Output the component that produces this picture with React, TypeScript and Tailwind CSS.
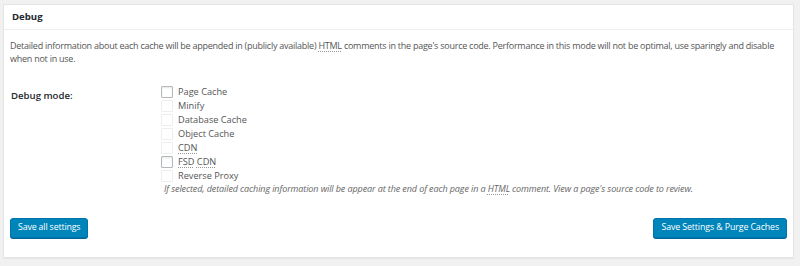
import React from "react";

const items = [
  { label: "Page Cache", on: true },
  { label: "Minify", on: false },
  { label: "Database Cache", on: false },
  { label: "Object Cache", on: false },
  { label: "CDN", on: false, abbr: true },
  { label: "FSD CDN", on: true, abbr: true },
  { label: "Reverse Proxy", on: false },
];

function Abbr({ children }: { children: React.ReactNode }) {
  return (
    <span className="underline decoration-dotted decoration-[#999] underline-offset-2">
      {children}
    </span>
  );
}

export default function App() {
  return (
    <div
      className="w-[800px] h-[266px] bg-[#f1f1f1] pt-[4px] pl-[3px] pr-[6px] text-[#444]"
      style={{ fontFamily: '"Open Sans", "Noto Sans", sans-serif' }}
    >
      <div className="bg-white h-[254px] border border-[#e5e5e5] shadow-[0_1px_1px_rgba(0,0,0,0.04)]">
        {/* header */}
        <div className="h-[25px] border-b border-[#eee] flex items-center pl-[8px]">
          <h3 className="text-[9.6px] font-bold text-[#23282d]">Debug</h3>
        </div>

        <div className="px-[6px] pt-[9px]">
          <p className="text-[9px] tracking-[-0.25px] leading-[13px] text-[#555] pr-[2px]">
            Detailed information about each cache will be appended in (publicly available){" "}
            <Abbr>HTML</Abbr> comments in the page's source code. Performance in this mode
            will not be optimal, use sparingly and disable when not in use.
          </p>

          <div className="flex mt-[20px]">
            <div className="w-[151px] pl-[1px] pt-[4px] text-[9.6px] font-semibold text-[#23282d]">
              Debug mode:
            </div>
            <div className="flex flex-col">
              {items.map((it) => (
                <label key={it.label} className="flex items-center h-[14px] text-[9.2px] text-[#555]">
                  <span
                    className={`w-[12px] h-[12px] mr-[5px] rounded-[1px] border bg-white ${
                      it.on ? "border-[#b4b9be] shadow-[inset_0_1px_2px_rgba(0,0,0,0.1)]" : "border-[#eee]"
                    }`}
                  />
                  {it.abbr && it.label === "FSD CDN" ? (
                    <span>
                      <Abbr>FSD</Abbr> <Abbr>CDN</Abbr>
                    </span>
                  ) : it.abbr ? (
                    <Abbr>{it.label}</Abbr>
                  ) : (
                    it.label
                  )}
                </label>
              ))}
              <p className="text-[9px] tracking-[-0.1px] italic text-[#666] leading-[12px] ml-[3px]">
                If selected, detailed caching information will be appear at the end of each page in a{" "}
                <Abbr>HTML</Abbr> comment. View a page's source code to review.
              </p>
            </div>
          </div>

          <div className="flex justify-between mt-[23px]">
            <button className="h-[20px] px-[7px] bg-[#0085ba] border border-[#0073aa] rounded-[3px] text-white text-[8.8px] tracking-[-0.15px] shadow-[0_1px_0_#006799]">
              Save all settings
            </button>
            <button className="h-[20px] px-[7px] bg-[#0085ba] border border-[#0073aa] rounded-[3px] text-white text-[8.8px] tracking-[-0.1px] shadow-[0_1px_0_#006799]">
              Save Settings &amp; Purge Caches
            </button>
          </div>
        </div>
      </div>
    </div>
  );
}
